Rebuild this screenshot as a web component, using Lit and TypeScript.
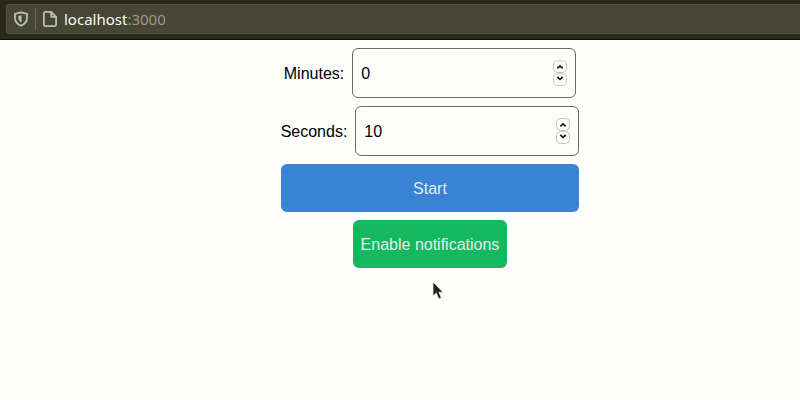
import { LitElement, html, css, svg } from "lit";
import { customElement, property } from "lit/decorators.js";

@customElement("browser-bar")
class BrowserBar extends LitElement {
  static styles = css`
    :host { display: block; height: 40px; box-sizing: border-box; padding: 4px 0 5px 6px; background: #2a2a1c; border-bottom: 1px solid #0c0c08; }
    .field { height: 30px; box-sizing: border-box; display: flex; align-items: center; background: #464634; border: 1px solid #525240; border-right: 0; border-radius: 3px 0 0 3px; padding-left: 7px; }
    .shield { width: 14px; height: 16px; }
    .line { width: 1px; height: 22px; background: #68685a; margin: 0 7px; }
    .page { width: 14px; height: 16px; }
    .url { margin-left: 7px; font: 15px/20px "Noto Sans", sans-serif; color: #f9f9fa; white-space: pre; }
    .port { color: #98988c; }
    svg { display: block; fill: none; stroke: #bcbcb8; stroke-width: 1.8; stroke-linejoin: round; }
  `;
  render() {
    return html`<div class="field">
      <svg class="shield" viewBox="0 0 14 16"><path d="M7 1.3 13 2.8V7C13 10.6 10.8 13 7 14.7 3.2 13 1 10.6 1 7V2.8Z"/><path d="M7.5 4.2V11.6C5.3 10.3 4.4 8.7 4.4 6.9V5Z" fill="#bcbcb8" stroke="none"/></svg>
      <div class="line"></div>
      <svg class="page" viewBox="0 0 14 16"><path d="M2.7.9H8.2L13.1 5.8V13.3Q13.1 15.1 11.3 15.1H2.7Q.9 15.1.9 13.3V2.7Q.9.9 2.7.9ZM8.2.9V5.8H13.1"/></svg>
      <div class="url">localhost<span class="port">:3000</span></div>
    </div>`;
  }
}

@customElement("number-field")
class NumberField extends LitElement {
  @property() label = "";
  @property() value = "";
  static styles = css`
    :host { display: flex; align-items: center; justify-content: center; color: #000; }
    .label { margin-right: 8px; padding-top: 2px; }
    .value { padding-top: 2px; }
    .box { width: 224px; height: 50px; box-sizing: border-box; border: 1px solid #6b6b60; border-radius: 6px; padding: 0 8px; display: flex; align-items: center; justify-content: space-between; background: #fdfdfb; }
    .spin { width: 14px; height: 26px; display: block; }
    .key { fill: #fdfdfb; stroke: #c8c8b4; }
    .arrow { fill: none; stroke: #18181b; stroke-width: 1.7; }
  `;
  render() {
    return html`<span class="label">${this.label}</span>
      <div class="box"><span class="value">${this.value}</span>
        <svg class="spin" viewBox="0 0 14 26">
          ${[0, 13].map((y) => svg`<rect class="key" x=".5" y=${y + 0.5} width="13" height="12" rx="4"/>`)}
          <path class="arrow" d="M4.3 8.3 7 5.8 9.7 8.3M4.3 16.8 7 19.3 9.7 16.8"/>
        </svg>
      </div>`;
  }
}

@customElement("app-root")
class AppRoot extends LitElement {
  static styles = css`
    :host { display: block; position: relative; height: 400px; overflow: hidden; background: #fdfdfb; font: 16px/24px "Liberation Sans", Arial, sans-serif; }
    .form { display: flex; flex-direction: column; align-items: center; gap: 8px; width: 298px; margin: 8px 0 0 281px; }
    button { display: block; height: 48px; border: 0; border-radius: 6px; padding: 2px 0 0; font: inherit; color: #e3ecee; white-space: nowrap; }
    .start { width: 298px; background: #3a82d2; }
    .notify { width: 154px; background: #13b85f; }
    .cursor { position: absolute; left: 432px; top: 281px; width: 14px; height: 20px; }
  `;
  render() {
    return html`<browser-bar></browser-bar>
      <div class="form">
        <number-field label="Minutes:" value="0"></number-field>
        <number-field label="Seconds:" value="10"></number-field>
        <button class="start">Start</button>
        <button class="notify">Enable notifications</button>
      </div>
      <svg class="cursor" viewBox="0 0 14 20"><path d="M1 1V15L4.3 12 6.7 17.8 9.3 16.7 6.9 11.2H11Z" fill="#222225" stroke="#e6e6e0" stroke-width=".8"/></svg>`;
  }
}
